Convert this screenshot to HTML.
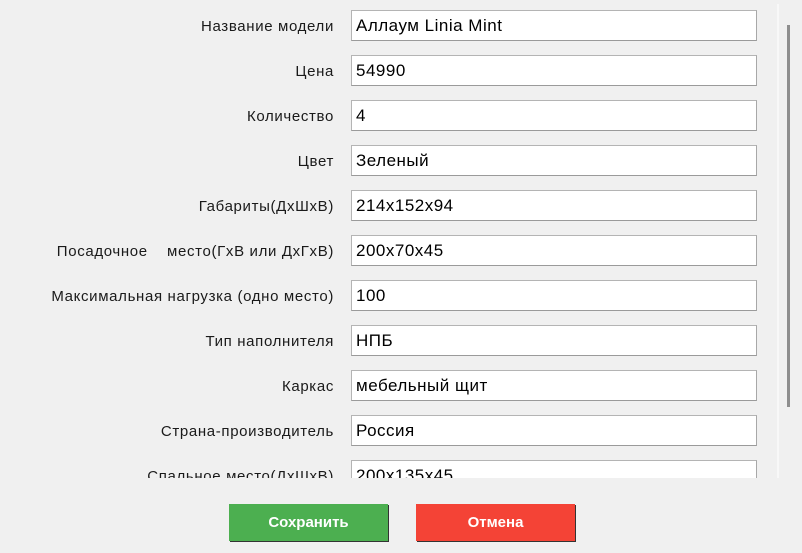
<!DOCTYPE html>
<html><head><meta charset="utf-8"><style>
body{margin:0;width:802px;height:553px;background:#f0f0f0;font-family:"Liberation Sans",sans-serif;position:relative;overflow:hidden}
.clip{position:absolute;left:0;top:0;width:777px;height:478px;overflow:hidden}
.row{position:absolute;left:0;width:802px;height:31px}
.lbl{position:absolute;right:468px;width:400px;text-align:right;top:8px;font-size:15px;color:#1a1a1a;white-space:nowrap;letter-spacing:0.65px}
.inp{position:absolute;left:351px;top:0;background:#fff;border:1px solid #b4b4b4;border-bottom-color:#9a9a9a;border-right-color:#a8a8a8;font-size:17px;letter-spacing:0.5px;line-height:29px;padding-left:4px;box-sizing:border-box;width:406px;height:31px;color:#000}
.sep{position:absolute;left:777px;top:4px;width:2px;height:474px;background:#f8f8f8}
.sb{position:absolute;left:787px;top:25px;width:3px;height:382px;background:#8e8e8e}
.btn{position:absolute;top:504px;height:37px;width:159px;color:#fff;font-weight:bold;font-size:15px;text-align:center;line-height:37px;box-shadow:1px 1px 0 #333}
</style></head><body>
<div class="clip">
<div class="row" style="top:10px"><div class="lbl">Название модели</div><div class="inp">Аллаум Linia Mint</div></div>
<div class="row" style="top:55px"><div class="lbl">Цена</div><div class="inp">54990</div></div>
<div class="row" style="top:100px"><div class="lbl">Количество</div><div class="inp">4</div></div>
<div class="row" style="top:145px"><div class="lbl">Цвет</div><div class="inp">Зеленый</div></div>
<div class="row" style="top:190px"><div class="lbl">Габариты(ДхШхВ)</div><div class="inp">214x152x94</div></div>
<div class="row" style="top:235px"><div class="lbl">Посадочное&nbsp;&nbsp;&nbsp; место(ГхВ или ДхГхВ)</div><div class="inp">200x70x45</div></div>
<div class="row" style="top:280px"><div class="lbl">Максимальная нагрузка (одно место)</div><div class="inp">100</div></div>
<div class="row" style="top:325px"><div class="lbl">Тип наполнителя</div><div class="inp">НПБ</div></div>
<div class="row" style="top:370px"><div class="lbl">Каркас</div><div class="inp">мебельный щит</div></div>
<div class="row" style="top:415px"><div class="lbl">Страна-производитель</div><div class="inp">Россия</div></div>
<div class="row" style="top:460px"><div class="lbl">Спальное место(ДхШхВ)</div><div class="inp">200x135x45</div></div>
</div>
<div class="sep"></div>
<div class="sb"></div>
<div class="btn" style="left:229px;background:#4caf50">Сохранить</div>
<div class="btn" style="left:416px;background:#f44336">Отмена</div>
</body></html>
